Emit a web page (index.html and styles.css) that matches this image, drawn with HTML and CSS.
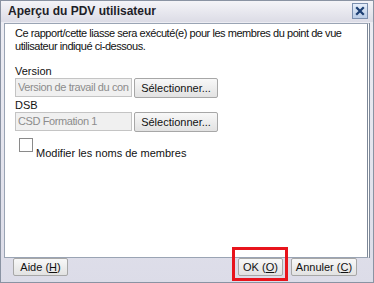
FILE: index.html
```html
<!DOCTYPE html>
<html lang="fr">
  <head>
    <meta charset="UTF-8" />
    <title>Aperçu du PDV utilisateur</title>
    <link rel="stylesheet" href="styles.css">
  </head>
  <body>
    <div class="dialog">
      <div class="titlebar">
        <span class="title">Aperçu du PDV utilisateur</span>
        <span class="close">
          <svg width="12" height="12" viewBox="0 0 12 12">
            <path d="M3 3 L9 9 M9 3 L3 9" stroke="#1d3f73" stroke-width="2.2" stroke-linecap="square" />
          </svg>
        </span>
      </div>
      <div class="panel">
        <p class="intro">Ce rapport/cette liasse sera exécuté(e) pour les membres du point de vue<br />utilisateur indiqué ci-dessous.</p>

        <div class="field">
          <label>Version</label>
          <div class="row">
            <input type="text" class="text" value="Version de travail du consolidé" disabled />
            <button class="btn pick">Sélectionner...</button>
          </div>
        </div>
        <div class="field">
          <label>DSB</label>
          <div class="row">
            <input type="text" class="text" value="CSD Formation 1" disabled />
            <button class="btn pick">Sélectionner...</button>
          </div>
        </div>

        <div class="check">
          <span class="box"></span>
          <span class="check-label">Modifier les noms de membres</span>
        </div>
      </div>
      <div class="footer">
        <button class="btn aide">Aide (<u>H</u>)</button>
        <div class="right">
          <span class="mark"><button class="btn ok">OK (<u>O</u>)</button></span>
          <button class="btn cancel">Annuler (<u>C</u>)</button>
        </div>
      </div>
    </div>
  </body>
</html>
```

FILE: styles.css
```css
body {
  margin: 0;
  background-color: #ffffff;
  font-family: "Liberation Sans", Arial, sans-serif;
  font-size: 11px;
}
.dialog {
  width: 372px;
  height: 281px;
  border: 1px solid #8a93a3;
  background: linear-gradient(#eeeef4, #dcdce8);
  display: flex;
  flex-direction: column;
}
.titlebar {
  height: 21px;
  display: flex;
  align-items: center;
  justify-content: space-between;
  padding: 0 5px 0 7px;
  background: linear-gradient(#f4f4f8, #dcdce6);
}
.title {
  font-weight: bold;
  font-size: 12px;
  color: #1e1e28;
}
.close {
  width: 14px;
  height: 14px;
  border: 1px solid #7b8fae;
  background: linear-gradient(#e6eefa, #b9cce6);
  display: flex;
  align-items: center;
  justify-content: center;
}
.panel {
  height: 231px;
  margin: 1px 3px 0 3px;
  background-color: #ffffff;
  border: 1px solid #9aa4b4;
  border-right: 3px double #7d8898;
  padding: 3px 10px 0 10px;
}
.intro {
  margin: 0 0 13px 0;
  line-height: 13px;
  color: #111;
  white-space: nowrap;
  letter-spacing: -0.45px;
}
.field {
  margin-bottom: 2px;
}
.field label {
  display: block;
  line-height: 11px;
  color: #111;
}
.row {
  display: flex;
  gap: 2px;
  margin-top: 1px;
}
.text {
  width: 117px;
  height: 19px;
  box-sizing: border-box;
  margin: 0;
  padding: 0 2px;
  border: 1px solid #c4c4c4;
  background-color: #f0f0f0;
  color: #8c8c8c;
  font: inherit;
  letter-spacing: -0.4px;
}
.btn {
  font: inherit;
  color: #111;
  border: 1px solid #a7a7a7;
  border-radius: 2px;
  background: linear-gradient(#f8f8f8, #e2e2e2);
  padding: 0;
  margin: 0;
}
.pick {
  width: 84px;
  height: 20px;
}
.check {
  display: flex;
  align-items: flex-start;
  margin: 6px 0 0 4px;
}
.box {
  width: 12px;
  height: 12px;
  border: 1px solid #8a8a8a;
  background-color: #fff;
}
.check-label {
  margin: 9px 0 0 3px;
  color: #111;
}
.footer {
  flex: 1;
  display: flex;
  align-items: center;
  justify-content: space-between;
  padding: 0 16px 6px 12px;
}
.right {
  display: flex;
  align-items: flex-end;
  height: 18px;
  gap: 3px;
}
.aide {
  width: 55px;
  height: 18px;
}
.cancel {
  width: 66px;
  height: 18px;
}
.mark {
  display: flex;
  padding: 8px 2px 2px 3px;
  border: 3px solid #e8141c;
  margin-bottom: -5px;
}
.ok {
  height: 18px;
  width: 45px;
}
```
